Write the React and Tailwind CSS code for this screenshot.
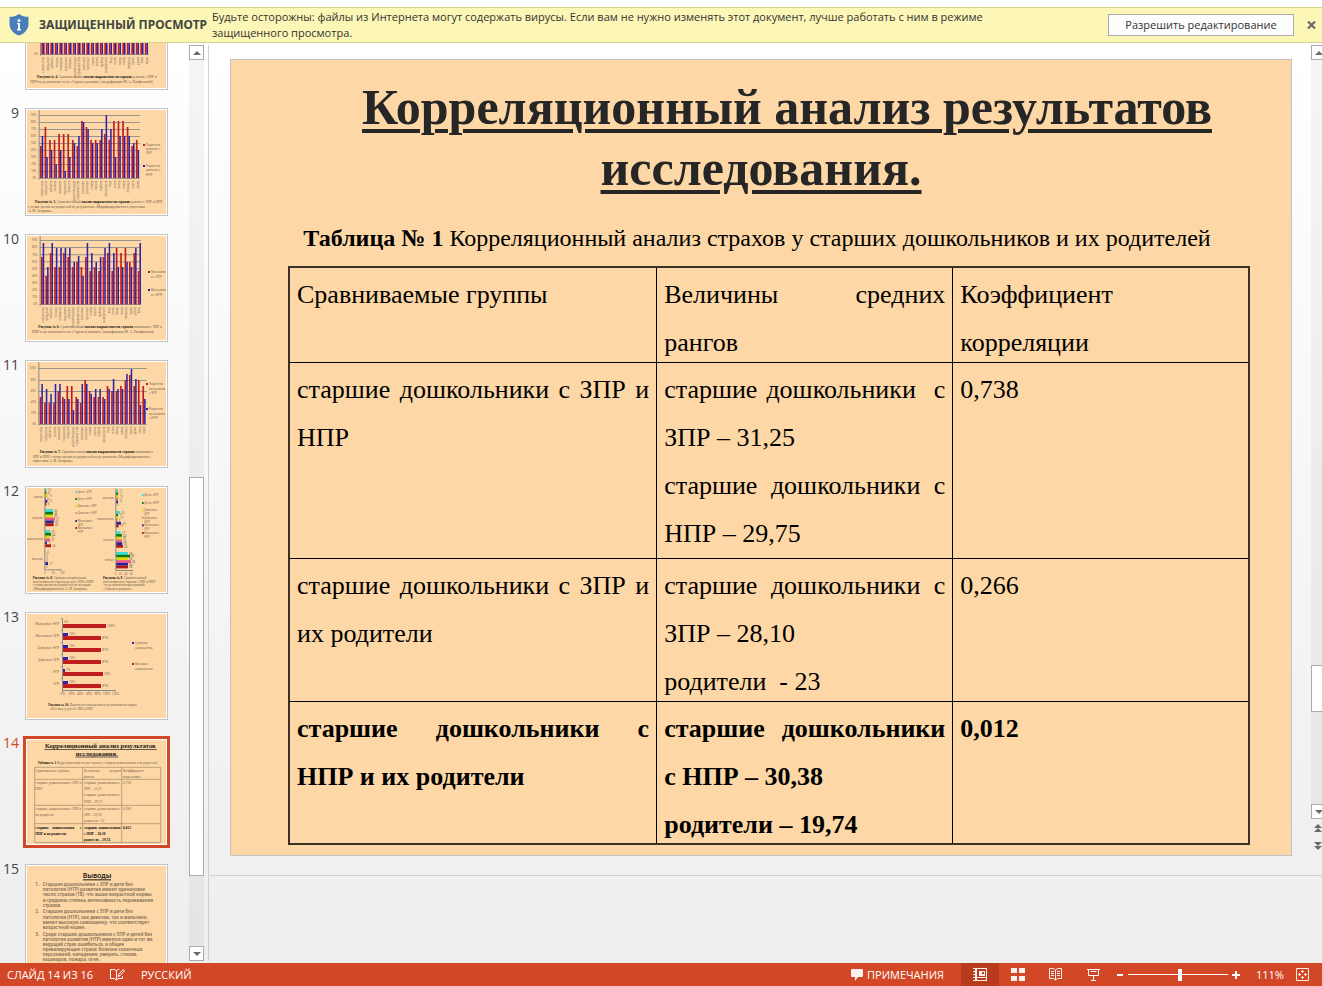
import React from 'react';

const RED = '#c21d1d';
const BLUE = '#2f22a8';
const GREY = '#8a8a8a';
const INK = '#7d6a58';

const FEARS = [
  'смерть отца', 'нападение', 'заболеть', 'темнота', 'наказание', 'персонажи', 'опоздать',
  'родители умрут', 'страшные сны', 'животные', 'транспорт', 'стихия', 'высота', 'глубина',
  'замкнутость', 'вода', 'огонь', 'пожар', 'война', 'площади', 'врачи', 'уколы', 'боль', 'звуки',
];

function Caption({ lines, size = 10.5 }) {
  return (
    <g fontFamily="Liberation Serif, serif" fontSize={size} fill="#6b5a4a">
      {lines.map((l, i) => (
        <text key={i} x={l.x} y={l.y}>
          {l.head && <tspan fontWeight="bold" fill="#111">{l.head}</tspan>}
          {l.text}
          {l.bold && <tspan fontWeight="bold" fill="#111">{l.bold}</tspan>}
          {l.tail}
        </text>
      ))}
    </g>
  );
}

function ColumnChart({ x0, x1, base, step, red, blue, grid, labels, legend, caption, top = 0 }) {
  return (
    <>
      {grid.map((y, i) => (
        <rect key={i} x={x0 - 4} y={y - 1} width={x1 - x0 + 4} height="2.6" fill={GREY} />
      ))}
      <rect x={x0 - 4} y={top} width="3" height={base - top + 4} fill={GREY} />
      {grid.map((y, i) => labels[i] && (
        <text key={i} x={x0 - 11} y={y + 3} textAnchor="end" fontSize="8" fill={INK} fontFamily="Noto Sans, sans-serif">
          {labels[i]}
        </text>
      ))}
      {red.map((r, i) => (
        <g key={i}>
          <rect x={x0 + i * step} y={r} width="5" height={base - r} fill={RED} />
          <rect x={x0 + i * step + 5} y={blue[i]} width="4.6" height={base - blue[i]} fill={BLUE} />
          <text
            transform={`translate(${x0 + i * step + 8} ${base + 8}) rotate(-90)`}
            textAnchor="end"
            fontSize="8"
            fill={INK}
            fontFamily="Noto Sans, sans-serif"
          >
            {FEARS[i]}
          </text>
        </g>
      ))}
      {legend.map((l, i) => (
        <g key={i} fontSize="9" fill={INK} fontFamily="Noto Sans, sans-serif">
          <rect x={l.x} y={l.y} width="6" height="6" fill={i ? BLUE : RED} />
          {l.lines.map((t, k) => (
            <text key={k} x={l.x + 9} y={l.y + 6 + k * l.gap}>{t}</text>
          ))}
        </g>
      ))}
      <Caption lines={caption} />
    </>
  );
}

const TENS = ['90%', '80%', '70%', '60%', '50%', '40%', '30%', '20%', '10%', '0%'];

function Slide8() {
  return (
    <ColumnChart
      x0={43} x1={365} base={211} step={13.5} top={20} grid={[30, 75, 120, 165, 211]} labels={['', '', '', '', '0%']}
      red={[90, 80, 70, 90, 60, 75, 85, 95, 60, 85, 90, 70, 65, 80, 90, 75, 85, 95, 60, 70, 80, 85, 75, 90]}
      blue={[80, 70, 75, 85, 90, 60, 75, 85, 95, 60, 85, 90, 70, 65, 80, 90, 75, 85, 95, 60, 70, 80, 85, 75]}
      legend={[]}
      caption={[
        { x: 30, y: 282, head: 'Рисунок № 4. ', text: 'Сравнительный ', bold: 'анализ выраженности страхов ', tail: 'девочек с ЗПР и' },
        { x: 10, y: 297, text: 'НПР по результатам теста «Страхи в домиках» (модификация М. А. Панфиловой)' },
      ]}
    />
  );
}

function Slide9() {
  return (
    <ColumnChart
      x0={39} x1={338} base={204} step={13.7} grid={[16, 37, 58, 79, 100, 121, 142, 163, 184, 205]} labels={TENS}
      red={[108, 51, 90, 90, 72, 72, 72, 90, 108, 33, 51, 90, 90, 90, 72, 90, 33, 33, 33, 51, 108, 90]}
      blue={[78, 141, 120, 162, 120, 183, 141, 99, 78, 36, 57, 99, 99, 57, 15, 57, 141, 78, 78, 78, 99, 120]}
      legend={[
        { x: 348, y: 102, gap: 12, lines: ['Родители', 'девочек с', 'ЗПР'] },
        { x: 348, y: 165, gap: 13, lines: ['Родители', 'девочек с', 'НПР'] },
      ]}
      caption={[
        { x: 24, y: 279, head: 'Рисунок № 5. ', text: 'Сравнительный ', bold: 'анализ выраженности страхов ', tail: 'девочек с ЗПР и НПР' },
        { x: 4, y: 294, text: 'с точки зрения их родителей по результатам «Модифицированного опросника' },
        { x: 4, y: 306, text: 'А. И. Захарова».' },
      ]}
    />
  );
}

function Slide10() {
  return (
    <ColumnChart
      x0={42} x1={342} base={205} step={13.2} grid={[13, 34, 56, 77, 98, 120, 141, 163, 184, 205]} labels={TENS}
      red={[63, 120, 51, 93, 93, 51, 63, 93, 78, 93, 63, 105, 93, 105, 63, 51, 105, 36, 51, 36, 78, 51, 105]}
      blue={[21, 93, 21, 36, 36, 36, 36, 78, 60, 120, 21, 51, 78, 63, 36, 21, 51, 93, 93, 78, 93, 36, 21]}
      legend={[
        { x: 363, y: 105, gap: 14, lines: ['Мальчики', 'и с ЗПР'] },
        { x: 363, y: 159, gap: 14, lines: ['Мальчики', 'и с НПР'] },
      ]}
      caption={[
        { x: 34, y: 276, head: 'Рисунок № 6. ', text: 'Сравнительный ', bold: 'анализ выраженности страхов ', tail: 'мальчиков с ЗПР и' },
        { x: 14, y: 291, text: 'НПР по результатам теста «Страхи в домиках» (модификация М. А. Панфиловой)' },
      ]}
    />
  );
}

function Slide11() {
  return (
    <ColumnChart
      x0={38} x1={359} base={186} step={13.4} grid={[19, 55, 88, 121, 154, 187]}
      labels={['100%', '80%', '60%', '40%', '20%', '0%']}
      red={[105, 123, 123, 123, 87, 105, 72, 72, 105, 123, 54, 87, 105, 105, 105, 72, 87, 87, 72, 54, 39, 72, 54, 72]}
      blue={[66, 81, 96, 66, 66, 111, 111, 144, 111, 66, 66, 96, 81, 81, 111, 81, 51, 81, 81, 36, 21, 51, 129, 111]}
      legend={[
        { x: 357, y: 63, gap: 14, lines: ['Родители', 'мальчиков', 'с ЗПР'] },
        { x: 357, y: 138, gap: 14, lines: ['Родители', 'мальчиков', 'с НПР'] },
      ]}
      caption={[
        { x: 38, y: 273, head: 'Рисунок № 7. ', text: 'Сравнительный ', bold: 'анализ выраженности страхов ', tail: 'мальчиков с' },
        { x: 17, y: 288, text: 'ЗПР и НПР с точки зрения их родителей по результатам «Модифицированного' },
        { x: 17, y: 300, text: 'опросника А. И. Захарова».' },
      ]}
    />
  );
}

const SIX = ['#35dfd6', '#0a7a12', '#e2d60a', '#e8578a', '#2a2298', '#ab1a1a'];

const LEFT_LEGEND = [
  [9, 'Дети с ЗПР'], [30, 'Дети с НПР'], [51, 'Девочки с ЗПР'], [73, 'Девочки с НПР'],
  [96, 'Мальчики с', 'ЗПР'], [117, 'Мальчики с', 'НПР'],
];
const RIGHT_LEGEND = [
  [18, 'Дети с ЗПР'], [42, 'Дети с НПР'], [64, 'Девочки с', 'ЗПР'], [87, 'Девочки с', 'НПР'],
  [109, 'Мальчики с', 'ЗПР'], [132, 'Мальчики с', 'НПР'],
];

function SeriesLegend({ x, items }) {
  return items.map(([y, first, second], i) => (
    <g key={i}>
      <rect x={x} y={y} width="5" height={i === 3 ? 4 : 6} fill={SIX[i]} />
      <text x={x + 7} y={y + 6}>{first}</text>
      {second && <text x={x + 7} y={y + 17}>{second}</text>}
    </g>
  ));
}

function BarGroups({ x, tops, values, names, axisTop, axisBottom, h }) {
  return (
    <>
      {tops.map((t, g) => (
        <g key={g} fontSize="8" fill={INK} fontFamily="Noto Sans, sans-serif">
          <text x={x - 7} y={t + h * 3 + 3} textAnchor="end">{names[g]}</text>
          {values[g].map((v, i) => (
            <g key={i}>
              <rect x={x} y={t + i * h} width={v} height={h} fill={SIX[i]} />
              <text x={x + v + 4} y={t + i * h + 8}>{Math.round(v * 1.9)}</text>
            </g>
          ))}
        </g>
      ))}
      <rect x={x - 2} y={axisTop} width="3" height={axisBottom - axisTop} fill={GREY} />
      <rect x={x - 2} y={axisBottom} width="53" height="3" fill={GREY} />
    </>
  );
}

function Slide12() {
  return (
    <>
      <BarGroups
        x={54} h={8.6} axisTop={2} axisBottom={244} tops={[1, 63, 126, 188]}
        names={['низкая', 'средняя', 'повышенная', 'высокая']}
        values={[[5, 4, 8, 3, 7, 4], [24, 24, 24, 30, 26, 26], [15, 18, 14, 15, 6, 18], [2, 0, 0, 0, 9, 0]]}
      />
      <BarGroups
        x={267} h={8.2} axisTop={2} axisBottom={246} tops={[5, 69, 130, 192]}
        names={['высокая', 'повышенная', 'средняя', 'низкая']}
        values={[[6, 6, 8, 6, 6, 0], [12, 6, 8, 4, 15, 8], [14, 18, 16, 18, 19, 21], [36, 42, 36, 45, 36, 36]]}
      />
      <g fontSize="8" fill={INK} fontFamily="Noto Sans, sans-serif">
        <SeriesLegend x={145} items={LEFT_LEGEND} />
        <SeriesLegend x={345} items={RIGHT_LEGEND} />
        <text x="51" y="257">0</text>
        <text x="74" y="257">50</text>
        <text x="99" y="257">100</text>
        <text x="263" y="260">0</text>
        <text x="275" y="260">20</text>
        <text x="292" y="260">40</text>
        <text x="308" y="260">60</text>
      </g>
      <Caption
        lines={[
          { x: 17, y: 273, head: 'Рисунок № 8. ', text: 'Сравнительный анализ' },
          { x: 17, y: 285, text: 'интенсивности страхов детей с ЗПР и НПР' },
          { x: 17, y: 295, text: 'с точки зрения их родителей по методике' },
          { x: 17, y: 306, text: '«Модифицированного А. И. Захарова»' },
          { x: 228, y: 273, head: 'Рисунок № 9. ', text: 'Сравнительный' },
          { x: 228, y: 285, text: 'интенсивности страхов с ЗПР и НПР' },
          { x: 232, y: 295, text: 'по результатам проективной' },
          { x: 228, y: 306, text: '«Страхи в домиках».' },
        ]}
        size={10}
      />
    </>
  );
}

function Slide13() {
  const rows = [
    ['Мальчики с НПР', 0, 129, '0%', '100%'],
    ['Мальчики с ЗПР', 15, 114, '13%', '87%'],
    ['Девочки с НПР', 15, 114, '13%', '87%'],
    ['Девочки с ЗПР', 15, 114, '13%', '87%'],
    ['НПР', 6, 120, '7%', '93%'],
    ['ЗПР', 15, 114, '13%', '87%'],
  ];
  return (
    <>
      <g fontSize="9" fill={INK} fontFamily="Noto Sans, sans-serif">
        {rows.map((r, i) => (
          <g key={r[0]}>
            <text x="97" y={33 + i * 36} textAnchor="end">{r[0]}</text>
            <rect x="108" y={21 + i * 36} width={r[1]} height="9" fill={BLUE} />
            <rect x="108" y={30 + i * 36} width={r[2]} height="12" fill={RED} />
            <text x={111 + r[1]} y={27 + i * 36}>{r[3]}</text>
            <text x={112 + r[2]} y={39 + i * 36}>{r[4]}</text>
            <rect x="101" y={12 + i * 36} width="6" height="2" fill={GREY} />
          </g>
        ))}
        {['0%', '20%', '40%', '60%', '80%', '100%', '120%'].map((t, i) => (
          <g key={t}>
            <text x={107 + i * 26.3} y="243" textAnchor="middle">{t}</text>
            <rect x={105 + i * 26.3} y="228" width="2" height="6" fill={GREY} />
          </g>
        ))}
        <rect x="105" y="12" width="3" height="218" fill={GREY} />
        <rect x="105" y="228" width="161" height="3" fill={GREY} />
        <rect x="315" y="84" width="6" height="6" fill={BLUE} />
        <text x="324" y="91">Средняя</text>
        <text x="324" y="105">самооценка</text>
        <rect x="315" y="147" width="6" height="6" fill={RED} />
        <text x="324" y="154">Высокая</text>
        <text x="324" y="168">самооценка</text>
      </g>
      <Caption
        size={9.5}
        lines={[
          { x: 64, y: 276, head: 'Рисунок № 10. ', text: 'Показатели самооценки по результатам методики' },
          { x: 68, y: 288, text: '«Лесенка» у детей с ЗПР и НПР' },
        ]}
      />
    </>
  );
}

function Slide14() {
  return (
    <g fontFamily="Liberation Serif, serif" fill="#7a654f" fontSize="10.5">
      <g fontSize="19.5" fontWeight="bold" fill="#1c1c1c" textAnchor="middle">
        <text x="220" y="24">Корреляционный анализ результатов</text>
        <text x="209" y="48">исследования.</text>
      </g>
      <rect x="52" y="27" width="337" height="2" fill="#1c1c1c" />
      <rect x="146" y="50" width="128" height="2" fill="#1c1c1c" />
      <text x="32" y="72" fontSize="9.5">
        <tspan fontWeight="bold" fill="#111">Таблица № 1 </tspan>
        Корреляционный анализ страхов у старших дошкольников и их родителей
      </text>
      <g fill="none" stroke="#a08560" strokeWidth="2">
        <path d="M23 82H401V308H23ZM23 118H401M23 196H401M23 251H401M167 82V308M284 82V308" />
      </g>
      <text x="25" y="96">Сравниваемые группы</text>
      <text x="171" y="96">Величины</text>
      <text x="282" y="96" textAnchor="end">средних</text>
      <text x="171" y="114">рангов</text>
      <text x="288" y="96">Коэффициент</text>
      <text x="288" y="114">корреляции</text>
      <text x="25" y="132">старшие дошкольники с ЗПР и</text>
      <text x="25" y="150">НПР</text>
      <text x="171" y="132">старшие дошкольники с</text>
      <text x="171" y="150">ЗПР – 31,25</text>
      <text x="171" y="169">старшие дошкольники с</text>
      <text x="171" y="189">НПР – 29,75</text>
      <text x="288" y="132">0,738</text>
      <text x="25" y="210">старшие дошкольники с ЗПР и</text>
      <text x="25" y="228">их родители</text>
      <text x="171" y="210">старшие дошкольники с</text>
      <text x="171" y="228">ЗПР – 28,10</text>
      <text x="171" y="246">родители - 23</text>
      <text x="288" y="210">0,266</text>
      <g fontWeight="bold" fill="#111">
        <text x="25" y="268">старшие</text>
        <text x="76" y="268">дошкольники</text>
        <text x="164" y="268" textAnchor="end">с</text>
        <text x="25" y="286">НПР и их родители</text>
        <text x="171" y="268">старшие дошкольники</text>
        <text x="171" y="286">с НПР – 30,38</text>
        <text x="171" y="304">родители – 19,74</text>
        <text x="288" y="268">0,012</text>
      </g>
    </g>
  );
}

function Slide15() {
  const lines = [
    ['1.', 'Старшие дошкольники с ЗПР  и дети без', 59],
    ['', 'патологии (НТР) развития имеют одинаковое', 75],
    ['', 'число страхов (18), что выше возрастной нормы', 90],
    ['', 'и среднюю степень интенсивность  переживания', 107],
    ['', 'страхов.', 122],
    ['2.', 'Старшие дошкольники с ЗПР и дети без', 141],
    ['', 'патологии (НТР), как девочки, так и мальчики,', 158],
    ['', 'имеют высокую самооценку, что соответствует', 173],
    ['', 'возрастной норме.', 188],
    ['3.', 'Среди старших дошкольников с ЗПР и детей без', 210],
    ['', 'патологии развития (НТР)  имеется один и тот же', 225],
    ['', 'ведущий страх ошибиться,  и общие', 240],
    ['', 'превалирующие страхи: болезни сказочных', 255],
    ['', 'персонажей, нападения, умереть,  стихии,', 270],
    ['', 'кошмаров, пожара, огня.', 286],
  ];
  return (
    <g fontFamily="Noto Sans, sans-serif" fontSize="13.4" fontWeight="600" fill="#806c56">
      <text x="210" y="36" textAnchor="middle" fontSize="21" fill="#1c1c1c">Выводы</text>
      <rect x="168" y="40" width="84" height="3" fill="#1c1c1c" />
      {lines.map(([n, t, y]) => (
        <g key={y}>
          {n && <text x="25" y={y}>{n}</text>}
          <text x="47" y={y}>{t}</text>
        </g>
      ))}
    </g>
  );
}

const THUMBS = [
  [null, Slide8], [9, Slide9], [10, Slide10], [11, Slide11],
  [12, Slide12], [13, Slide13], [14, Slide14], [15, Slide15],
];

function Thumb({ number, Content, active }) {
  return (
    <li>
      <button type="button" aria-label={`Слайд ${number ?? ''}`} className="flex h-[108px] items-start gap-[6px] text-left">
        <span className={`w-[19px] text-right text-[14px] leading-[10px] ${active ? 'text-[#d24726]' : 'text-[#444]'}`}>
          {number}
        </span>
        <span
          className={`block border bg-white p-px ${active ? 'border-[#d24726] outline-2 outline-[#d24726]' : 'border-[#c3c3c3]'}`}
        >
          <svg viewBox="0 0 417 312" className="block h-[104px] w-[139px] bg-[#fdd7a5]">
            <Content />
          </svg>
        </span>
      </button>
    </li>
  );
}

function Arrow({ up, className = '' }) {
  return (
    <svg viewBox="0 0 8 4" className={`h-1 w-2 ${className}`} fill="#6a6a6a">
      <path d={up ? 'M4 0L8 4H0Z' : 'M0 0H8L4 4Z'} />
    </svg>
  );
}

function ScrollButton({ up }) {
  return (
    <button
      type="button"
      aria-label={up ? 'Вверх' : 'Вниз'}
      className="flex h-[15px] w-[15px] shrink-0 items-center justify-center border border-[#ababab] bg-white"
    >
      <Arrow up={up} />
    </button>
  );
}

function Lines({ lines }) {
  return (
    <p className="-mb-2 pt-[3px] leading-[48px] whitespace-pre">
      {lines.map(([text, justify], i) => (
        <span key={i} className={`block ${justify ? 'whitespace-nowrap [text-align-last:justify]' : ''}`}>{text}</span>
      ))}
    </p>
  );
}

const ROWS = [
  {
    h: 'h-[196px]',
    cells: [
      [['старшие дошкольники с ЗПР и', 1], ['НПР']],
      [['старшие дошкольники\u00a0 с', 1], ['ЗПР – 31,25'], ['старшие дошкольники с', 1], ['НПР – 29,75']],
      [['0,738']],
    ],
  },
  {
    h: 'h-[143px]',
    cells: [
      [['старшие дошкольники с ЗПР и', 1], ['их родители']],
      [['старшие дошкольники с', 1], ['ЗПР – 28,10'], ['родители  - 23']],
      [['0,266']],
    ],
  },
  {
    h: 'h-[143px] font-bold',
    cells: [
      [['старшие дошкольники с', 1], ['НПР и их родители']],
      [['старшие дошкольники', 1], ['с НПР – 30,38'], ['родители – 19,74']],
      [['0,012']],
    ],
  },
];

function Slide() {
  const cell = 'border border-black px-[7px] py-0 text-left align-top';
  return (
    <article className="h-[797px] border border-[#c3c3c3] bg-[#fdd7a5] pt-[17px] pr-[41px] pl-[57px] font-['Liberation_Serif',serif] text-black">
      <h1 className="pr-[16px] text-center text-[50px] leading-[61px] font-bold text-[#262626] underline decoration-[4px] underline-offset-[5px]">
        <span className="block pl-[52px]">Корреляционный анализ результатов</span>
        <span className="block">исследования.</span>
      </h1>
      <p className="mt-[24px] mb-[13px] pr-[24px] text-center text-[24px] leading-[30px]">
        <b>Таблица № 1</b> Корреляционный анализ страхов у старших дошкольников и их родителей
      </p>
      <table className="w-full table-fixed border-collapse border-2 border-[#3a3026] text-[26px]">
        <colgroup>
          <col className="w-[38.3%]" />
          <col className="w-[30.85%]" />
          <col className="w-[30.85%]" />
        </colgroup>
        <thead>
          <tr className="h-[95px]">
            <th className={`${cell} font-normal`}><Lines lines={[['Сравниваемые группы']]} /></th>
            <th className={`${cell} font-normal`}><Lines lines={[['Величины средних', 1], ['рангов']]} /></th>
            <th className={`${cell} font-normal`}><Lines lines={[['Коэффициент'], ['корреляции']]} /></th>
          </tr>
        </thead>
        <tbody>
          {ROWS.map((r, i) => (
            <tr key={i} className={r.h}>
              {r.cells.map((c, k) => (
                <td key={k} className={cell}><Lines lines={c} /></td>
              ))}
            </tr>
          ))}
        </tbody>
      </table>
    </article>
  );
}

function MessageBar() {
  return (
    <header className="mt-[7px] flex h-9 shrink-0 items-center border-y border-[#d9d48b] bg-[#fcf7b6] pl-[9px] text-[#444]">
      <svg viewBox="0 0 20 22" className="h-[22px] w-5 shrink-0">
        <path d="M10 0C12.500 2 16 2.800 19.500 2.800V10C19.500 15.500 15.500 19.500 10 21.500C4.500 19.500 .5 15.500 .5 10V2.800C4 2.800 7.500 2 10 0Z" fill="#4a7ebb" />
        <circle cx="10" cy="6.500" r="1.500" fill="#fff" />
        <path d="M8 9H11V15H12V16.500H8V15H9V10.300H8Z" fill="#fff" />
      </svg>
      <strong className="ml-[10px] w-[163px] shrink-0 font-['Noto_Sans',sans-serif] text-[12px] whitespace-nowrap">
        ЗАЩИЩЕННЫЙ ПРОСМОТР
      </strong>
      <p className="ml-[10px] w-[830px] text-[11px] leading-4 text-[#333]">
        Будьте осторожны: файлы из Интернета могут содержать вирусы. Если вам не нужно изменять этот документ, лучше работать с ним в режиме<br />
        защищенного просмотра.
      </p>
      <button type="button" className="ml-auto h-[22px] w-[186px] shrink-0 border border-[#ababab] bg-[#fdfdfd] text-[11px] leading-5 text-[#333]">
        Разрешить редактирование
      </button>
      <button type="button" aria-label="Закрыть" className="mr-[6px] ml-[13px] shrink-0">
        <svg viewBox="0 0 9 8" className="h-2 w-[9px]" stroke="#6a6a6a" strokeWidth="2.200">
          <path d="M1 .5L8 7.500M8 .5L1 7.500" />
        </svg>
      </button>
    </header>
  );
}

function StatusBar() {
  return (
    <footer className="flex h-[23px] shrink-0 items-center bg-[#d24726] pl-[7px] text-[11px] leading-5 text-white">
      <span className="w-[103px] whitespace-nowrap">СЛАЙД 14 ИЗ 16</span>
      <button type="button" aria-label="Орфография" className="w-[31px]">
        <svg viewBox="0 0 15 13" className="h-[13px] w-[15px]" fill="none" stroke="#fff">
          <path d="M6.500 2.500C5 1.500 3 1.500 .5 1.500V10.500H4.500L6.500 12L8.500 10.500H12.500V8M6.500 2.500V11.500M6.500 2.500C7.200 1.900 8 1.500 9.500 1.500M8 8.500L8.700 6.500L13 1.500L14.500 2.700L10 7.700Z" />
        </svg>
      </button>
      <span>РУССКИЙ</span>
      <button type="button" className="ml-auto flex items-center gap-1">
        <svg viewBox="0 0 12 12" className="h-3 w-3" fill="#fff" fillOpacity=".92">
          <path d="M1 0H11Q12 0 12 1V7Q12 8 11 8H7L4 12V8H1Q0 8 0 7V1Q0 0 1 0Z" />
        </svg>
        <span className="w-[75px] text-left whitespace-nowrap">ПРИМЕЧАНИЯ</span>
      </button>
      <div className="ml-[19px] flex h-full">
        <button type="button" aria-label="Обычный" className="flex w-[38px] items-center justify-center bg-[#b83b1d]">
          <svg viewBox="0 0 14 13" className="h-[13px] w-[14px]" fill="#fff" fillOpacity=".92">
            <path d="M0 0H14V1H0ZM0 12H14V13H0ZM0 3H2V4H0ZM0 6H2V7H0ZM0 9H2V10H0ZM2 1H4V12H2ZM13 1H14V12H13Z" />
            <path fillRule="evenodd" d="M6 3H12V8H6ZM9 4V6H11V4Z" />
            <path d="M4 9H13V10H4Z" />
          </svg>
        </button>
        <button type="button" aria-label="Сортировщик слайдов" className="flex w-[38px] items-center justify-center">
          <svg viewBox="0 0 14 13" className="h-[13px] w-[14px]" fill="#fff" fillOpacity=".92">
            <path d="M0 0H6V5H0ZM8 0H14V5H8ZM0 8H6V13H0ZM8 8H14V13H8Z" />
          </svg>
        </button>
        <button type="button" aria-label="Режим чтения" className="flex w-[37px] items-center justify-center">
          <svg viewBox="0 0 13 13" className="h-[13px] w-[13px]" fill="none" stroke="#fff" strokeOpacity=".9">
            <path d="M.5 .5H4.500L6.500 2L8.500 .5H12.500V10.500H8.500L6.500 12L4.500 10.500H.5ZM6.500 2V12M2 3.500H5M2 5.500H5M2 7.500H5M8 3.500H11M8 5.500H11M8 7.500H11" />
          </svg>
        </button>
        <button type="button" aria-label="Показ слайдов" className="flex w-[38px] items-center justify-center">
          <svg viewBox="0 0 13 13" className="h-[13px] w-[13px]" fill="none" stroke="#fff">
            <path d="M0 1.500H13M1.500 1.500V7.500H11.500V1.500M3.500 3.500H9.500M6.500 8V12M4 12.500H9" />
          </svg>
        </button>
      </div>
      <button type="button" aria-label="Уменьшить" className="ml-[5px] h-[2px] w-[6px] bg-white" />
      <input
        type="range"
        aria-label="Масштаб"
        defaultValue="52"
        className="ml-[5px] h-3 w-[100px] appearance-none bg-[linear-gradient(#fff,#fff)] bg-[length:100%_1px] bg-center bg-no-repeat [&::-webkit-slider-thumb]:h-3 [&::-webkit-slider-thumb]:w-1 [&::-webkit-slider-thumb]:appearance-none [&::-webkit-slider-thumb]:rounded-none [&::-webkit-slider-thumb]:bg-white"
      />
      <button type="button" aria-label="Увеличить" className="ml-1">
        <svg viewBox="0 0 8 8" className="h-2 w-2" fill="#fff"><path d="M3 0H5V3H8V5H5V8H3V5H0V3H3Z" /></svg>
      </button>
      <span className="ml-4 w-10 whitespace-nowrap">111%</span>
      <button type="button" aria-label="Вписать слайд" className="mr-[13px]">
        <svg viewBox="0 0 13 13" className="h-[13px] w-[13px]" fill="none" stroke="#fff">
          <path d="M.5 .5H12.500V12.500H.5ZM6.500 2V5M5 3.500H8M6.500 8V11M5 9.500H8M2 6.500H5M3.500 5V8M8 6.500H11M9.500 5V8" strokeOpacity=".9" />
        </svg>
      </button>
    </footer>
  );
}

export default function App() {
  return (
    <div className="flex h-screen flex-col overflow-hidden bg-white font-['Open_Sans',sans-serif]">
      <MessageBar />
      <div className="flex min-h-0 flex-1 bg-linear-to-b from-white to-[#eeeeee]">
        <aside className="flex w-[210px] shrink-0 overflow-hidden">
          <ol className="-mt-[61px] flex w-[189px] flex-col gap-[18px]">
            {THUMBS.map(([n, C], i) => <Thumb key={i} number={n} Content={C} active={n === 14} />)}
          </ol>
          <div className="mt-[2px] mb-[2px] flex w-[15px] flex-col bg-black/4">
            <ScrollButton up />
            <div className="grow-[417]" />
            <div className="h-[399px] border border-[#ababab] bg-white" />
            <div className="grow-[70]" />
            <ScrollButton />
          </div>
          <div className="my-[2px] ml-1 w-px bg-[#d0d0d0]" />
        </aside>
        <main className="flex min-w-0 flex-1 flex-col">
          <div className="flex h-[833px] shrink-0 border-b border-[#d0d0d0]">
            <div className="min-w-0 flex-1 pt-4 pr-[19px] pl-5"><Slide /></div>
            <div className="mt-[2px] flex w-[11px] flex-col overflow-hidden">
              <div className="flex h-[774px] w-[15px] flex-col bg-black/4">
                <ScrollButton up />
                <div className="grow-[605]" />
                <div className="h-[47px] border border-[#ababab] bg-white" />
                <div className="grow-[92]" />
                <ScrollButton />
              </div>
              <button type="button" aria-label="Предыдущий слайд" className="mt-[5px] ml-[3px] flex w-2 flex-col">
                <Arrow up /><Arrow up />
              </button>
              <button type="button" aria-label="Следующий слайд" className="mt-[10px] ml-[3px] flex w-2 flex-col">
                <Arrow /><Arrow />
              </button>
            </div>
          </div>
        </main>
      </div>
      <StatusBar />
    </div>
  );
}
